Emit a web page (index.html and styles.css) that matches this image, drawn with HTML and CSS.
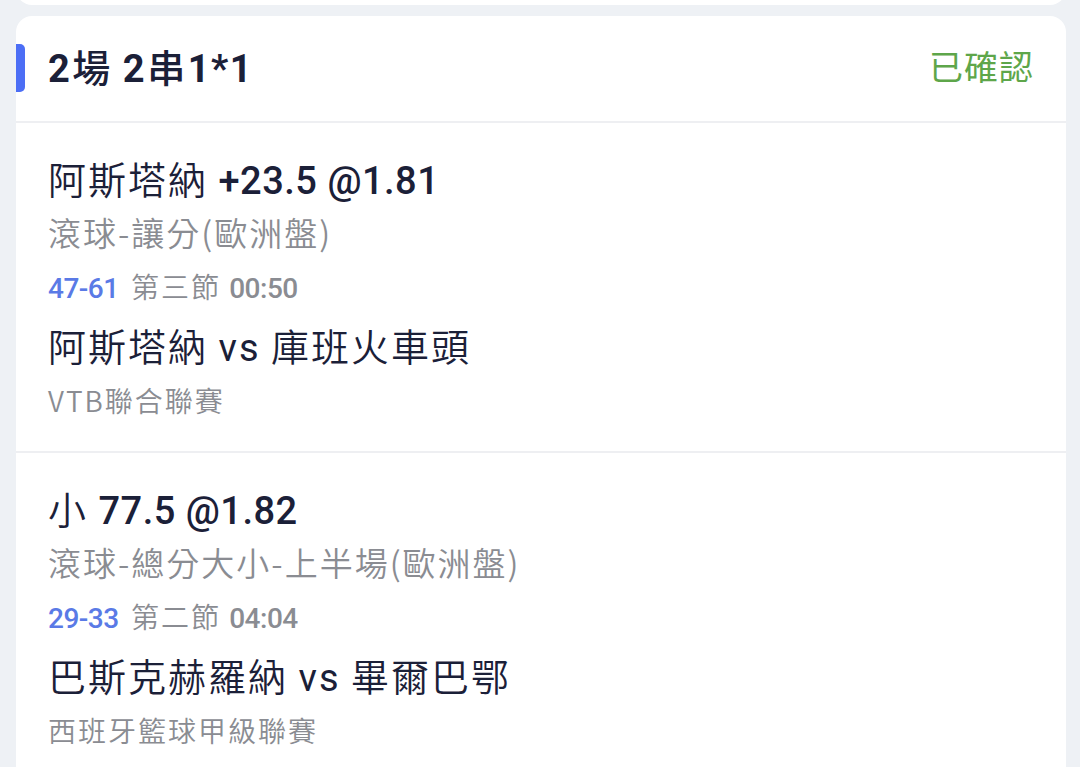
FILE: index.html
```html
<!DOCTYPE html>
<html lang="zh-Hant">
<head>
<meta charset="utf-8">
<link rel="stylesheet" href="styles.css">
</head>
<body>
<div class="page">
  <div class="card card-prev"></div>
  <div class="card">
    <div class="header">
      <span class="mark"></span>
      <h1 class="title"><b>2</b><span class="cjk">場</span> <b>2</b><span class="cjk">串</span><b>1*1</b></h1>
      <span class="status">已確認</span>
    </div>
    <div class="item">
      <div class="pick">阿斯塔納 <b>+23.5 @1.81</b></div>
      <div class="market">滾球-讓分(歐洲盤)</div>
      <div class="live"><span class="score">47-61</span> 第三節 <span class="clock">00:50</span></div>
      <div class="teams">阿斯塔納 <span class="vs">vs</span> 庫班火車頭</div>
      <div class="league">VTB聯合聯賽</div>
    </div>
    <div class="item">
      <div class="pick">小 <b>77.5 @1.82</b></div>
      <div class="market">滾球-總分大小-上半場(歐洲盤)</div>
      <div class="live"><span class="score">29-33</span> 第二節 <span class="clock">04:04</span></div>
      <div class="teams">巴斯克赫羅納 <span class="vs">vs</span> 畢爾巴鄂</div>
      <div class="league">西班牙籃球甲級聯賽</div>
    </div>
  </div>
</div>
</body>
</html>
```

FILE: styles.css
```css
html, body {
  margin: 0;
  padding: 0;
  background: #eef1f5;
}
body {
  font-family: "Noto Sans CJK TC", "Noto Sans", sans-serif;
  color: #1b2038;
}
.page {
  padding: 0 14px 0 16px;
  display: flex;
  flex-direction: column;
  gap: 11px;
  height: 767px;
  overflow: hidden;
}
.card {
  background: #fff;
  border-radius: 16px;
}
.card-prev {
  height: 36px;
  margin-top: -31px;
  flex: none;
}
.header {
  position: relative;
  display: flex;
  align-items: center;
  justify-content: space-between;
  height: 105px;
  padding: 0 32px 0 32px;
  border-bottom: 2px solid #eeeff2;
}
.mark {
  position: absolute;
  left: 0;
  top: 28px;
  width: 9px;
  height: 48px;
  background: #4c6ef5;
  border-radius: 0 5px 5px 0;
}
.title {
  margin: 0;
  font-size: 38px;
  line-height: 50px;
  font-weight: 400;
  letter-spacing: 1.5px;
  color: #1b2038;
  position: relative;
  top: -3px;
}
.title b {
  font-family: "Roboto", sans-serif;
  font-weight: 700;
  line-height: 1;
}
.title .cjk {
  font-weight: 500;
  margin: 0 1px;
}
.status {
  font-size: 34px;
  line-height: 50px;
  color: #5ea64a;
  letter-spacing: 1px;
  position: relative;
  top: -3px;
}
.item {
  padding: 29px 32px 29px;
  border-bottom: 2px solid #eeeff2;
}
.pick {
  font-size: 38px;
  line-height: 52px;
  letter-spacing: 2px;
  font-weight: 350;
}
.pick b {
  font-family: "Roboto", "Noto Sans CJK TC", sans-serif;
  font-weight: 500;
  letter-spacing: 0.5px;
  line-height: 1;
}
.market {
  font-size: 33px;
  line-height: 56px;
  color: #8a8c92;
  letter-spacing: 2px;
  font-weight: 350;
}
.live {
  font-size: 28px;
  line-height: 52px;
  color: #8a8c92;
  letter-spacing: 2px;
  font-weight: 350;
}
.score, .clock {
  font-family: "Roboto", sans-serif;
  font-weight: 500;
  letter-spacing: -0.5px;
  line-height: 1;
}
.score {
  color: #5a7ae6;
  margin-right: 4px;
}
.teams {
  font-size: 38px;
  line-height: 66px;
  letter-spacing: 2px;
  font-weight: 350;
}
.vs {
  font-family: "Roboto", sans-serif;
  font-weight: 400;
  line-height: 1;
}
.league {
  font-size: 28px;
  line-height: 44px;
  color: #8a8c92;
  letter-spacing: 2px;
  font-weight: 350;
}
```
